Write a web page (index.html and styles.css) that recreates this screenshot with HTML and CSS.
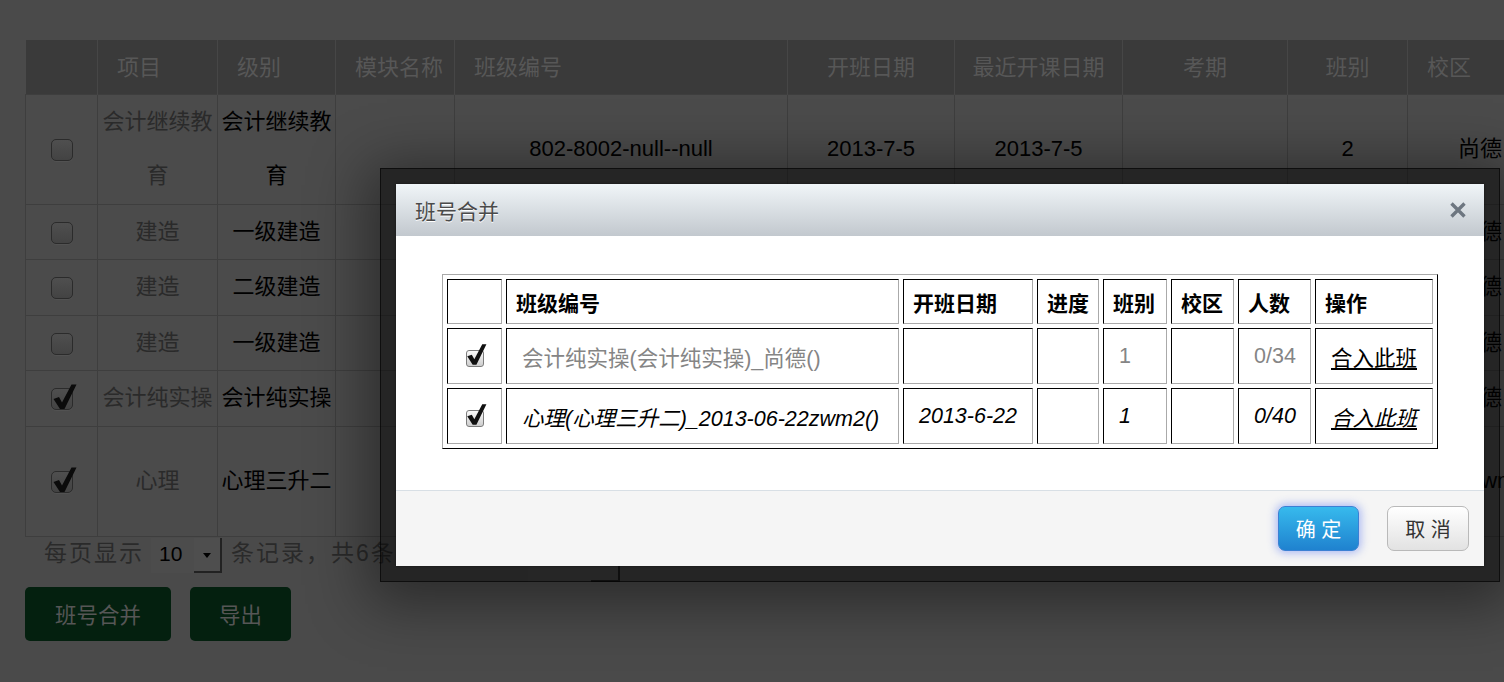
FILE: index.html
```html
<!DOCTYPE html>
<html lang="zh">
<head>
<meta charset="utf-8">
<title>班号合并</title>
<link rel="stylesheet" href="styles.css">
</head>
<body>
<div class="page">
  <table class="grid">
    <colgroup>
      <col class="c-chk"><col class="c-proj"><col class="c-lvl"><col class="c-mod"><col class="c-code">
      <col class="c-date"><col class="c-date2"><col class="c-exam"><col class="c-cls"><col class="c-camp">
    </colgroup>
    <thead>
      <tr>
        <th></th><th class="l">项目</th><th class="l">级别</th><th class="l">模块名称</th><th class="l">班级编号</th>
        <th>开班日期</th><th>最近开课日期</th><th>考期</th><th>班别</th><th class="l">校区</th>
      </tr>
    </thead>
    <tbody>
      <tr>
        <td><span class="cb"></span></td><td class="muted">会计继续教育</td><td>会计继续教育</td><td></td>
        <td>802-8002-null--null</td><td>2013-7-5</td><td>2013-7-5</td><td></td><td>2</td><td class="camp">尚德</td>
      </tr>
      <tr>
        <td><span class="cb"></span></td><td class="muted">建造</td><td>一级建造</td><td></td>
        <td></td><td></td><td></td><td></td><td></td><td class="camp">尚德</td>
      </tr>
      <tr>
        <td><span class="cb"></span></td><td class="muted">建造</td><td>二级建造</td><td></td>
        <td></td><td></td><td></td><td></td><td></td><td class="camp">尚德</td>
      </tr>
      <tr>
        <td><span class="cb"></span></td><td class="muted">建造</td><td>一级建造</td><td></td>
        <td></td><td></td><td></td><td></td><td></td><td class="camp">尚德</td>
      </tr>
      <tr>
        <td><span class="cb on"><svg class="tick" viewBox="0 0 24 24" width="24" height="24"><path d="M1.5 10 L7 8 L10 13.5 L19.5 -4.5 L24.5 -4.5 L12.5 20 L8 20 Z"/></svg></span></td>
        <td class="muted">会计纯实操</td><td>会计纯实操</td><td></td>
        <td></td><td></td><td></td><td></td><td></td><td class="camp">尚德</td>
      </tr>
      <tr class="tall">
        <td><span class="cb on"><svg class="tick" viewBox="0 0 24 24" width="24" height="24"><path d="M1.5 10 L7 8 L10 13.5 L19.5 -4.5 L24.5 -4.5 L12.5 20 L8 20 Z"/></svg></span></td>
        <td class="muted">心理</td><td>心理三升二</td><td></td>
        <td></td><td></td><td></td><td></td><td></td><td class="camp">2zwm2()</td>
      </tr>
    </tbody>
  </table>

  <div class="pager">
    <span class="ptext">每页显示</span>
    <span class="select"><span class="sel-val">10</span><span class="sel-btn"><svg viewBox="0 0 8 5" width="8" height="5"><path d="M0 0 H8 L4 5 Z" fill="#000"/></svg></span></span>
    <span class="ptext">条记录，共6条记录</span>
    <span class="jump"><span class="jump-btn"></span></span>
  </div>

  <div class="actions">
    <button class="gbtn wide">班号合并</button>
    <button class="gbtn">导出</button>
  </div>
</div>

<div class="frame">
  <div class="dialog">
    <div class="dlg-head">
      <span class="dlg-title">班号合并</span>
      <svg class="close" viewBox="0 0 18 18" width="18" height="18"><path d="M2.5 2.5 L15.5 15.5 M15.5 2.5 L2.5 15.5" stroke="#6d7680" stroke-width="3.4" stroke-linecap="butt"/></svg>
    </div>
    <div class="dlg-body">
      <table class="mt">
        <thead>
          <tr>
            <th class="w1"></th><th class="w2">班级编号</th><th class="w3">开班日期</th><th class="w4">进度</th>
            <th class="w5">班别</th><th class="w6">校区</th><th class="w7">人数</th><th class="w8">操作</th>
          </tr>
        </thead>
        <tbody>
          <tr class="grey">
            <td class="ck"><span class="mcb"><svg class="mtick" viewBox="0 0 24 24" width="20" height="20"><path d="M1.5 10 L7 8 L10 13.5 L19.5 -4.5 L24.5 -4.5 L12.5 20 L8 20 Z"/></svg></span></td>
            <td>会计纯实操(会计纯实操)_尚德()</td><td></td><td></td><td>1</td><td></td><td>0/34</td>
            <td><a href="#">合入此班</a></td>
          </tr>
          <tr class="ital">
            <td class="ck"><span class="mcb"><svg class="mtick" viewBox="0 0 24 24" width="20" height="20"><path d="M1.5 10 L7 8 L10 13.5 L19.5 -4.5 L24.5 -4.5 L12.5 20 L8 20 Z"/></svg></span></td>
            <td>心理(心理三升二)_2013-06-22zwm2()</td><td>2013-6-22</td><td></td><td>1</td><td></td><td>0/40</td>
            <td><a href="#">合入此班</a></td>
          </tr>
        </tbody>
      </table>
    </div>
    <div class="dlg-foot">
      <button class="btn btn-primary">确 定</button>
      <button class="btn btn-default">取 消</button>
    </div>
  </div>
</div>
</body>
</html>
```
FILE: styles.css
```css
* { box-sizing: border-box; }

html, body {
  margin: 0;
  width: 1504px;
  height: 682px;
  overflow: hidden;
}

body {
  position: relative;
  background: #4a4a4a;
  font-family: "Liberation Sans", "Noto Sans CJK SC", sans-serif;
}

.page {
  padding: 40px 0 0 25px;
}

/* background data grid (dimmed) */
.grid {
  border-collapse: collapse;
  table-layout: fixed;
  width: 1582px;
  font-size: 22px;
}
.c-chk { width: 72px; }
.c-proj { width: 120px; }
.c-lvl { width: 118px; }
.c-mod { width: 119px; }
.c-code { width: 333px; }
.c-date { width: 167px; }
.c-date2 { width: 168px; }
.c-exam { width: 165px; }
.c-cls { width: 120px; }
.c-camp { width: 200px; }

.grid th {
  height: 54px;
  padding: 0 0 3px;
  background: #3a3a3a;
  color: #575757;
  font-weight: normal;
  border-right: 1px solid #464646;
  text-align: center;
}
.grid th.l {
  text-align: left;
  padding-left: 19px;
}
.grid td {
  padding: 0;
  line-height: 54.5px;
  border: 1px solid #3e3e3e;
  background: #4b4b4b;
  color: #000;
  text-align: center;
  vertical-align: middle;
}
.grid td.muted { color: #2a2a2a; }
.grid td.camp {
  text-align: left;
  padding-left: 50px;
  white-space: nowrap;
}
.grid tr.tall td { height: 110px; }

.cb {
  display: inline-block;
  position: relative;
  width: 22px;
  height: 22px;
  vertical-align: middle;
  border: 1px solid #2b2b2b;
  border-radius: 5px;
  background: linear-gradient(#4f4f4f, #434343);
  box-shadow: 0 1px 0 rgba(255, 255, 255, 0.04);
}
.cb .tick {
  position: absolute;
  left: 0;
  top: 0;
  overflow: visible;
  fill: #0b0b0b;
}

/* pager */
.pager {
  display: flex;
  align-items: flex-start;
  width: 595px;
  height: 45px;
  padding-left: 19px;
  margin-top: 1px;
}
.ptext {
  font-size: 23px;
  letter-spacing: 2px;
  line-height: 31px;
  color: #2a2a2a;
  white-space: nowrap;
}
.select {
  display: flex;
  width: 71px;
  height: 35px;
  margin: 0 9px 0 7px;
  background: #4c4c4c;
}
.sel-val {
  flex: 1;
  padding-left: 8px;
  line-height: 31px;
  color: #000;
  font-size: 21px;
}
.sel-btn {
  width: 28px;
  display: flex;
  align-items: center;
  justify-content: center;
  padding-top: 3px;
  background: #4e4e4e;
  border-right: 2px solid #222;
  border-bottom: 2px solid #222;
}
.jump {
  display: flex;
  justify-content: flex-end;
  margin-left: auto;
  width: 92px;
  height: 44px;
  background: #4d4d4d;
}
.jump-btn {
  width: 29px;
  height: 100%;
  border-right: 2px solid #1e1e1e;
  border-bottom: 2px solid #1e1e1e;
}

.actions {
  display: flex;
  gap: 19px;
  margin-top: 4px;
}
.gbtn {
  height: 54px;
  width: 101px;
  border: none;
  border-radius: 5px;
  background: #04200f;
  color: #565656;
  font-family: "Liberation Sans", "Noto Sans CJK SC", sans-serif;
  font-size: 21.5px;
  padding: 0;
}
.gbtn.wide { width: 146px; }

/* modal */
.frame {
  position: absolute;
  left: 380px;
  top: 168px;
  width: 1120px;
  height: 414px;
  padding: 15px;
  background: rgba(0, 0, 0, 0.5);
  border: 1px solid rgba(0, 0, 0, 0.6);
  box-shadow: 0 10px 55px 12px rgba(0, 0, 0, 0.42);
}
.dialog {
  height: 100%;
  display: flex;
  flex-direction: column;
  background: #fff;
  box-shadow: 0 0 2px rgba(0, 0, 0, 0.5);
}
.dlg-head {
  flex: none;
  height: 52px;
  display: flex;
  align-items: center;
  justify-content: space-between;
  padding: 0 17px 0 19px;
  background: linear-gradient(#f0f5f8, #c2c8ce);
}
.dlg-title {
  font-size: 21px;
  color: #4a4a4a;
  text-shadow: 0 1px 0 #fff;
}
.close { display: block; }

.dlg-body {
  flex: 1;
  padding: 38px 46px 0;
}

.mt {
  width: 996px;
  table-layout: fixed;
  border-collapse: separate;
  border-spacing: 4px;
  border: 1px solid;
  border-color: #a9a9a9 #000 #000 #a9a9a9;
  font-size: 21.5px;
}
.mt th, .mt td {
  border: 1px solid;
  border-color: #000 #aaa #aaa #000;
  text-align: left;
  vertical-align: middle;
  white-space: nowrap;
}
.mt th {
  height: 45px;
  padding: 0 0 0 9px;
  font-size: 21px;
  font-weight: bold;
  color: #000;
}
.mt td {
  height: 56px;
  padding: 0 0 0 15px;
}
.w1 { width: 55px; }
.w2 { width: 393px; }
.w3 { width: 130px; }
.w4 { width: 62px; }
.w5 { width: 64px; }
.w6 { width: 63px; }
.w7 { width: 73px; }
.w8 { width: 118px; }

.mt tr.grey td { color: #858585; }
.mt tr.ital td { color: #000; font-style: italic; }
.mt a { color: #000; text-decoration: underline; }
.mt td.ck { padding: 0; text-align: center; }

.mcb {
  display: inline-block;
  position: relative;
  width: 18px;
  height: 17px;
  margin-top: 4px;
  vertical-align: middle;
  border: 1px solid #7d7d7d;
  border-radius: 3px;
  background: linear-gradient(#fbfbfb, #cdcdcd);
}
.mcb .mtick {
  position: absolute;
  left: -1px;
  top: -3px;
  overflow: visible;
  fill: #111;
}

.dlg-foot {
  flex: none;
  height: 76px;
  display: flex;
  justify-content: flex-end;
  align-items: flex-start;
  gap: 28px;
  padding: 15px 15px 0 0;
  background: #f5f5f5;
  border-top: 1px solid #d8dfe5;
}
.btn {
  height: 45px;
  border-radius: 7px;
  font-family: "Liberation Sans", "Noto Sans CJK SC", sans-serif;
  font-size: 20px;
  padding: 0;
}
.btn-primary {
  width: 81px;
  color: #fff;
  border: 1px solid #3c80d4;
  background: linear-gradient(#37baed, #1f82cf);
  box-shadow: 0 0 9px 2px rgba(80, 110, 240, 0.45);
}
.btn-default {
  width: 82px;
  color: #333;
  border: 1px solid #b9b9b9;
  background: linear-gradient(#ffffff, #e2e2e2);
}
```
